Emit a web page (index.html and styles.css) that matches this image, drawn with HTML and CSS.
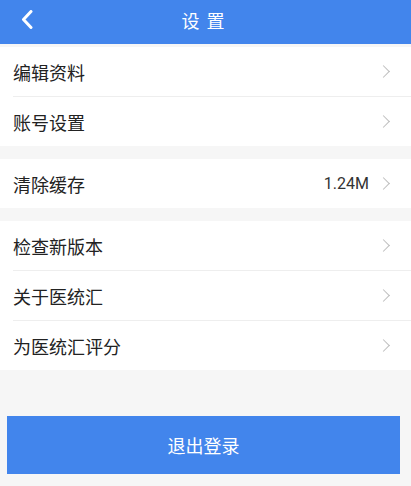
FILE: index.html
```html
<!DOCTYPE html>
<html lang="zh-CN">
<head>
  <meta charset="UTF-8">
  <meta name="viewport" content="width=device-width, initial-scale=1.0">
  <title>设置</title>
  <link rel="stylesheet" href="styles.css">
</head>
<body>

<header class="top-bar">
  <a class="back-btn" href="#">
    <svg width="12" height="19" viewBox="0 0 12 19"><path d="M10 1.5 L2.5 9.5 L10 17.5" fill="none" stroke="#fff" stroke-width="3" stroke-linecap="round" stroke-linejoin="round"/></svg>
  </a>
  <h1>设置</h1>
</header>

<div class="group">
  <a class="row" href="#"><span class="label">编辑资料</span><span class="arrow"></span></a>
  <a class="row" href="#"><span class="label">账号设置</span><span class="arrow"></span></a>
</div>

<div class="group">
  <a class="row" href="#"><span class="label">清除缓存</span><span class="value">1.24M</span><span class="arrow"></span></a>
</div>

<div class="group">
  <a class="row" href="#"><span class="label">检查新版本</span><span class="arrow"></span></a>
  <a class="row" href="#"><span class="label">关于医统汇</span><span class="arrow"></span></a>
  <a class="row" href="#"><span class="label">为医统汇评分</span><span class="arrow"></span></a>
</div>

<button class="logout-btn">退出登录</button>

</body>
</html>
```

FILE: styles.css
```css
body {
  margin: 0;
  background: #f6f6f6;
  font-family: "Noto Sans CJK SC", "Noto Sans", sans-serif;
  color: #222;
}
.top-bar {
  position: relative;
  height: 44px;
  background: #4285ec;
  display: flex;
  align-items: center;
  justify-content: center;
}
.top-bar h1 {
  margin: 0 0 5px;
  font-size: 18px;
  font-weight: normal;
  color: white;
  letter-spacing: 7px;
  padding-left: 2px;
  line-height: 1;
}
.back-btn {
  position: absolute;
  left: 21px;
  top: 10px;
  display: flex;
}
.group {
  background: white;
  margin-top: 13px;
}
.group:first-of-type {
  margin-top: 3px;
}
.row {
  display: flex;
  align-items: center;
  height: 49px;
  padding: 0 22px 0 13px;
  text-decoration: none;
  color: #222;
}
.row + .row {
  border-top: 1px solid #eee;
  margin-left: 13px;
  padding-left: 0;
}
.label {
  flex: 1;
  font-size: 18px;
  padding-top: 1px;
}
.value {
  font-family: Roboto, "Noto Sans", sans-serif;
  font-size: 16px;
  color: #333;
  margin-right: 10px;
}
.arrow {
  width: 8px;
  height: 8px;
  border-top: 1.5px solid #bdbdbd;
  border-right: 1.5px solid #bdbdbd;
  transform: rotate(45deg);
  margin-right: 1px;
}
.logout-btn {
  display: block;
  width: 393px;
  height: 58px;
  margin: 46px 0 0 7px;
  border: none;
  background: #4285ec;
  color: white;
  font-family: "Noto Sans CJK SC", sans-serif;
  font-size: 18px;
}
```
